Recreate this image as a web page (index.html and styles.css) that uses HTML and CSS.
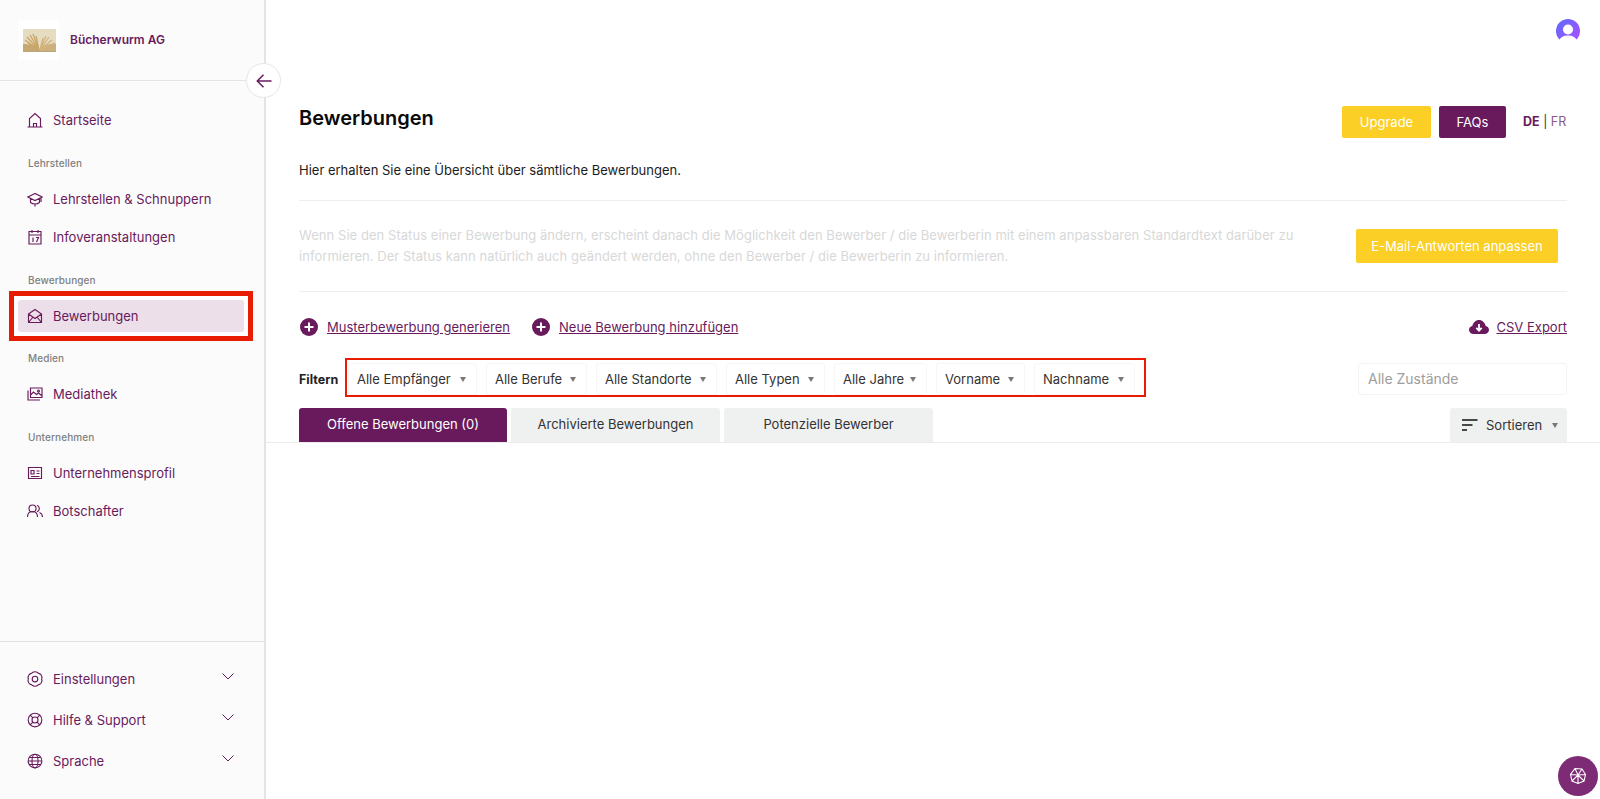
FILE: index.html
```html
<!DOCTYPE html>
<html lang="de">
<head>
<meta charset="utf-8">
<title>Bewerbungen</title>
<link rel="stylesheet" href="styles.css">
</head>
<body>
<div class="app">
  <aside class="sidebar">
    <div class="brand">
      <div class="logo">
        <svg width="33" height="23" viewBox="0 0 33 23">
          <rect width="33" height="23" fill="#e6dcc2"/>
          <rect y="20" width="33" height="3" fill="#b8a67c"/>
          <path d="M17 21 C12 17 7 15 0 15 V22 H17Z" fill="#c7a871"/>
          <path d="M16 21 L2 11 M16 21 L4 8 M16 21 L7 6 M16 21 L10 5 M16 21 L13 7 M16 21 L5 14" class="fan-a"/>
          <path d="M17 21 C21 16 26 14 33 15 V22 H17Z" fill="#cdb07b"/>
          <path d="M17 21 L20 9 M17 21 L23 7 M17 21 L26 8 M17 21 L29 11 M17 21 L32 14" class="fan-b"/>
        </svg>
      </div>
      <span class="brand-name">Bücherwurm AG</span>
    </div>
    <button class="toggle" aria-label="Einklappen">
      <svg width="16" height="14" viewBox="0 0 16 14"><path d="M15.500 7H1.500M7.500 .8 1.300 7l6.200 6.200" class="ic-s2"/></svg>
    </button>
    <nav class="nav">
      <a class="item"><svg class="ic" viewBox="0 0 16 16"><path d="M.5 15h15M2.500 15V6.500L8 1.500l5.500 5V15M6.500 15v-3.500h3V15"/></svg>Startseite</a>
      <div class="label">Lehrstellen</div>
      <a class="item"><svg class="ic" viewBox="0 0 16 16"><path d="M8 2.500.8 6 8 9.500 15.200 6ZM3.500 7.500v4c2.500 2 6.500 2 9 0v-4M14 7v4M8 13v2.500"/></svg>Lehrstellen &amp; Schnuppern</a>
      <a class="item"><svg class="ic" viewBox="0 0 16 16"><path d="M2 2.500h12V15H2ZM2 6h12M5 1v3M11 1v3M6 8.500v4.500M9 8.500h2.500L9.500 13"/></svg>Infoveranstaltungen</a>
      <div class="label">Bewerbungen</div>
      <div class="marked">
        <a class="item active"><svg class="ic" viewBox="0 0 16 16"><path d="M1.500 6 8 1.500 14.500 6v8.500h-13ZM1.500 6 8 10.500 14.500 6M1.500 14.500 6 9M14.500 14.500 10 9"/></svg>Bewerbungen</a>
      </div>
      <div class="label">Medien</div>
      <a class="item"><svg class="ic" viewBox="0 0 16 16"><path d="M3.500 2h11.500v9.500H3.500ZM1 4.500V14h12M3.500 9l3-3 3 2.500 2-1.500 3 2.500"/><circle cx="11.500" cy="5" r="1"/></svg>Mediathek</a>
      <div class="label">Unternehmen</div>
      <a class="item"><svg class="ic" viewBox="0 0 16 16"><path d="M1.500 2.500h13v11h-13ZM4 5.500h3v3.500H4ZM9.500 6H12.500M9.500 8.500H12.500M4 11.500h8.500"/></svg>Unternehmensprofil</a>
      <a class="item"><svg class="ic" viewBox="0 0 16 16"><circle cx="5.500" cy="5.500" r="3.500"/><path d="M.5 14c0-3.500 2-5.500 5-5.500s5 2 5 5.500M10 2.200a3.500 3.500 0 0 1 0 6.600M12.500 9.500c2 .8 3 2.500 3 4.500"/></svg>Botschafter</a>
    </nav>
    <div class="side-foot">
      <a class="item foot"><svg class="ic" viewBox="0 0 16 16"><path d="M5.500 1.500c1.200-.9 3.800-.9 5 0 .5.700 1.100 1 2 1.100 1.300.5 2.500 2.700 2.500 3.800-.4.800-.4 2.400 0 3.200 0 1.100-1.200 3.300-2.500 3.800-.9.100-1.500.4-2 1.100-1.200.9-3.800.9-5 0-.5-.7-1.100-1-2-1.100C2.200 12.900 1 10.700 1 9.600c.4-.8.4-2.400 0-3.200C1 5.300 2.200 3.100 3.500 2.600c.9-.1 1.500-.4 2-1.100Z"/><circle cx="8" cy="8" r="2.800"/></svg>Einstellungen<svg class="chev" viewBox="0 0 12 7"><path d="M.5.500 6 6 11.500.500"/></svg></a>
      <a class="item foot"><svg class="ic" viewBox="0 0 16 16"><circle cx="8" cy="8" r="6.800"/><circle cx="8" cy="8" r="3"/><path d="M3.200 3.200l2.700 2.700M12.800 3.200l-2.700 2.700M3.200 12.800l2.700-2.700M12.800 12.800l-2.700-2.700"/></svg>Hilfe &amp; Support<svg class="chev" viewBox="0 0 12 7"><path d="M.5.500 6 6 11.500.500"/></svg></a>
      <a class="item foot"><svg class="ic" viewBox="0 0 16 16"><circle cx="8" cy="8" r="6.800"/><ellipse cx="8" cy="8" rx="3" ry="6.800"/><path d="M1.200 8h13.600M2.200 4.500h11.600M2.200 11.500h11.600"/></svg>Sprache<svg class="chev" viewBox="0 0 12 7"><path d="M.5.500 6 6 11.500.500"/></svg></a>
    </div>
  </aside>

  <main class="main">
    <div class="topbar">
      <svg class="avatar" width="24" height="24" viewBox="0 0 24 24">
        <defs><linearGradient id="av" x1="0" y1="0" x2="1" y2="1"><stop offset="0" stop-color="#5b6cff"/><stop offset="1" stop-color="#b04dff"/></linearGradient></defs>
        <circle cx="12" cy="12" r="12" fill="url(#av)"/>
        <circle cx="12" cy="10.500" r="5" fill="#fff"/>
        <path d="M3.500 20.500C6 17 9 16.500 12 16.500s6 .5 8.500 4V24h-17Z" fill="#fff"/>
      </svg>
    </div>
    <div class="head">
      <h1 class="title">Bewerbungen</h1>
      <a class="btn yellow">Upgrade</a>
      <a class="btn purple">FAQs</a>
      <div class="lang"><b>DE</b> <span class="sep">|</span> <span class="fr">FR</span></div>
    </div>
    <p class="sub">Hier erhalten Sie eine Übersicht über sämtliche Bewerbungen.</p>
    <div class="info">
      <p class="info-text">Wenn Sie den Status einer Bewerbung ändern, erscheint danach die Möglichkeit den Bewerber / die Bewerberin mit einem anpassbaren Standardtext darüber zu informieren. Der Status kann natürlich auch geändert werden, ohne den Bewerber / die Bewerberin zu informieren.</p>
      <a class="btn yellow wide">E-Mail-Antworten anpassen</a>
    </div>
    <div class="links">
      <a class="link"><svg class="plus" viewBox="0 0 18 18"><circle cx="9" cy="9" r="9"/><path d="M9 4.500v9M4.500 9h9"/></svg><span>Musterbewerbung generieren</span></a>
      <a class="link"><svg class="plus" viewBox="0 0 18 18"><circle cx="9" cy="9" r="9"/><path d="M9 4.500v9M4.500 9h9"/></svg><span>Neue Bewerbung hinzufügen</span></a>
      <a class="link csv"><svg class="cloud" viewBox="0 0 20 14"><path d="M4.500 14C2 14 0 12.300 0 10c0-2 1.400-3.600 3.300-3.900C4 2.600 6.800 0 10 0s6 2.600 6.700 6.100C18.600 6.400 20 8 20 10c0 2.300-2 4-4.500 4Z" fill="#691a5c"/><path d="M10 4v6M7.300 7.800 10 10.700l2.700-2.900" class="cloud-a"/></svg><span>CSV Export</span></a>
    </div>
    <div class="filters">
      <span class="filter-label">Filtern</span>
      <div class="filter-box">
        <div class="select s1">Alle Empfänger<i class="caret"></i></div>
        <div class="select s2">Alle Berufe<i class="caret"></i></div>
        <div class="select s3">Alle Standorte<i class="caret"></i></div>
        <div class="select s4">Alle Typen<i class="caret"></i></div>
        <div class="select s5">Alle Jahre<i class="caret"></i></div>
        <div class="select s6">Vorname<i class="caret"></i></div>
        <div class="select s7">Nachname<i class="caret"></i></div>
      </div>
      <div class="state">Alle Zustände</div>
    </div>
    <div class="tabs">
      <a class="tab on">Offene Bewerbungen (0)</a>
      <a class="tab">Archivierte Bewerbungen</a>
      <a class="tab">Potenzielle Bewerber</a>
      <a class="sort"><svg width="16" height="12" viewBox="0 0 16 12"><path d="M0 1h15.500M0 6h10.500M0 11h5" class="sort-l"/></svg>Sortieren<i class="caret"></i></a>
    </div>
  </main>
</div>
<button class="help" aria-label="Hilfe">
  <svg width="18" height="18" viewBox="0 0 18 18"><path d="M6 1.500 13 2l3.500 5.500L15 14l-6 2.500L3 14 1.500 7.500ZM6 1.500 9 8l4-6M1.500 7.500 9 8l7.500-.5M3 14l6-6 6 6M9 8v8.500" class="help-l"/></svg>
</button>
</body>
</html>
```

FILE: styles.css
```css
* { box-sizing: border-box; }
html, body { margin: 0; height: 100%; background: #fff; overflow: hidden; }
body { font-family: Inter, "Liberation Sans", sans-serif; font-size: 13px; color: #1c1c1c; letter-spacing: 0; }
a { color: inherit; text-decoration: none; }
p, h1 { margin: 0; }
button { border: 0; padding: 0; }

.app { display: flex; height: 799px; }

.sidebar { position: relative; width: 266px; flex: none; background: #fbfbfb; border-right: 2px solid #e4e4e4; display: flex; flex-direction: column; color: #691a5c; }
.brand { height: 81px; flex: none; border-bottom: 1px solid #e4e4e4; display: flex; align-items: center; padding-left: 19px; gap: 11px; }
.logo { width: 40px; height: 40px; background: #fff; display: flex; align-items: center; justify-content: center; }
.fan-a { fill: none; stroke: #c9a668; stroke-width: 1.300; }
.fan-b { fill: none; stroke: #d0b47e; stroke-width: 1.300; }
.brand-name { font-weight: 600; font-size: 12px; margin-top: -1px; }
.toggle { position: absolute; left: 246px; top: 63px; width: 35px; height: 35px; border-radius: 50%; background: #fff; border: 1px solid #e6e6e6; display: flex; align-items: center; justify-content: center; }
.ic-s2 { fill: none; stroke: #691a5c; stroke-width: 1.500; }

.nav { padding: 23px 20px 0 18px; }
.item { display: flex; align-items: center; height: 32px; margin: 0 0 6px; padding-left: 9px; gap: 10px; font-size: 13px; border-radius: 3px; }
.ic { width: 16px; height: 16px; flex: none; fill: none; stroke: #691a5c; stroke-width: 1.150; }
.label { height: 16px; line-height: 16px; margin: 19px 0 12px; padding-left: 10px; font-size: 10px; font-weight: 500; color: #7f7f7f; letter-spacing: .1px; }
.marked { margin: -9px -9px -10px; padding: 4px; border: 5px solid #e81c00; background: #fff; }
.marked .item { margin: 0; }
.active { background: #ecdfe9; }

.side-foot { margin-top: auto; border-top: 1px solid #e4e4e4; padding: 16px 18px 18px; }
.foot { height: 41px; margin: 0; }
.chev { width: 12px; height: 7px; margin-left: auto; margin-right: 12px; margin-top: -4px; fill: none; stroke: #691a5c; stroke-width: 1; }

.main { flex: 1; min-width: 0; padding: 0 33px; display: flex; flex-direction: column; }
.topbar { height: 106px; flex: none; display: flex; justify-content: flex-end; padding-top: 19px; }
.avatar { margin-right: -13px; }

.head { display: flex; align-items: flex-start; height: 32px; flex: none; }
.title { font-size: 20px; line-height: 24px; font-weight: 600; color: #0a0a0a; margin-right: auto; }
.btn { display: flex; align-items: center; justify-content: center; border-radius: 2px; font-size: 13px; height: 32px; }
.yellow { background: #fbcf25; color: #fff; width: 89px; }
.purple { background: #691a5c; color: #fff; width: 67px; margin-left: 8px; }
.lang { margin: 8px 0 0 17px; color: #691a5c; font-size: 12.500px; width: 44px; white-space: nowrap; }
.lang b { font-weight: 700; }
.sep { color: #333; }
.fr { color: #8b5a84; }

.sub { margin-top: 22px; line-height: 20px; }
.info { display: flex; align-items: center; justify-content: space-between; margin-top: 20px; height: 92px; border-top: 1px solid #eee; border-bottom: 1px solid #eee; flex: none; }
.info-text { width: 1005px; line-height: 21px; color: #d8d8d8; letter-spacing: .05px; }
.wide { width: 202px; height: 34px; margin-right: 9px; }

.links { display: flex; align-items: center; height: 20px; margin-top: 25px; gap: 21px; color: #691a5c; flex: none; }
.link { display: flex; align-items: center; gap: 9px; }
.link span { text-decoration: underline; }
.plus { width: 18px; height: 18px; margin-left: 1px; fill: #691a5c; stroke: none; }
.plus path { stroke: #fff; stroke-width: 2; fill: none; }
.csv { margin-left: auto; gap: 8px; }
.cloud { width: 20px; height: 14px; }
.cloud-a { fill: none; stroke: #fff; stroke-width: 1.800; }

.filters { display: flex; align-items: center; margin-top: 21px; height: 39px; flex: none; }
.filter-label { font-weight: 700; font-size: 12.500px; width: 46px; color: #222; margin-top: 3px; }
.filter-box { display: flex; height: 39px; width: 801px; border: 2px solid #e81c00; padding: 3px 0 0 1px; gap: 9px; }
.select { display: flex; align-items: center; justify-content: space-between; padding: 0 10px 0 8px; border: 1px solid #f6f6f6; border-radius: 3px; color: #333; background: #fff; }
.s1 { width: 129px; }
.s2 { width: 101px; }
.s3 { width: 121px; }
.s4 { width: 99px; }
.s5 { width: 93px; }
.s6 { width: 89px; }
.s7 { width: 101px; }
.caret { width: 0; height: 0; border-left: 3px solid transparent; border-right: 3px solid transparent; border-top: 5px solid #777; flex: none; }
.state { margin: 2px 0 0 auto; width: 209px; height: 32px; border: 1px solid #f3f3f3; border-radius: 3px; display: flex; align-items: center; padding-left: 9px; color: #9d9d9d; font-size: 14px; }

.tabs { display: flex; gap: 4px; margin: 11px -33px 0; padding: 0 33px; height: 35px; border-bottom: 1px solid #ececec; flex: none; }
.tab { width: 209px; height: 34px; display: flex; align-items: center; justify-content: center; padding-bottom: 3px; background: #eff0f0; border-radius: 3px 3px 0 0; color: #333; }
.tab.on { background: #691a5c; color: #fff; width: 208px; }
.sort { margin-left: auto; width: 117px; height: 34px; background: #eff0f0; border-radius: 3px 3px 0 0; display: flex; align-items: center; padding: 0 9px 0 12px; gap: 8px; color: #333; }
.sort .caret { margin-left: auto; }
.sort-l { fill: none; stroke: #111; stroke-width: 1.500; }

.help { position: fixed; left: 1558px; top: 756px; width: 40px; height: 40px; border-radius: 50%; background: #7c2b74; display: flex; align-items: center; justify-content: center; }
.help-l { fill: none; stroke: #fff; stroke-width: 1.100; }
```
